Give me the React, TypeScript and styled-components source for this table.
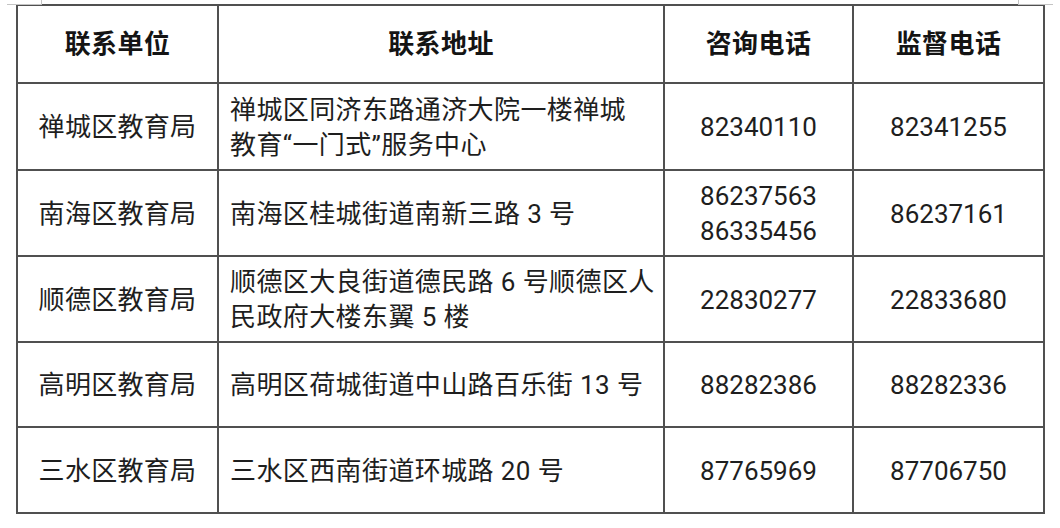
import React from "react";
import styled, { createGlobalStyle } from "styled-components";

interface Row {
  unit: string;
  address: string[];
  consult: string[];
  supervise: string;
  height: number;
}

const rows: Row[] = [
  {
    unit: "禅城区教育局",
    address: ["禅城区同济东路通济大院一楼禅城", "教育“一门式”服务中心"],
    consult: ["82340110"],
    supervise: "82341255",
    height: 87,
  },
  {
    unit: "南海区教育局",
    address: ["南海区桂城街道南新三路 3 号"],
    consult: ["86237563", "86335456"],
    supervise: "86237161",
    height: 86,
  },
  {
    unit: "顺德区教育局",
    address: ["顺德区大良街道德民路 6 号顺德区人", "民政府大楼东翼 5 楼"],
    consult: ["22830277"],
    supervise: "22833680",
    height: 86,
  },
  {
    unit: "高明区教育局",
    address: ["高明区荷城街道中山路百乐街 13 号"],
    consult: ["88282386"],
    supervise: "88282336",
    height: 85,
  },
  {
    unit: "三水区教育局",
    address: ["三水区西南街道环城路 20 号"],
    consult: ["87765969"],
    supervise: "87706750",
    height: 86,
  },
];

const GlobalStyle = createGlobalStyle`
  html, body {
    margin: 0;
    padding: 0;
    background: #ffffff;
  }
  body {
    font-family: Roboto, "Noto Sans CJK SC", sans-serif;
    color: #1e1e1e;
  }
`;

const Page = styled.div`
  position: relative;
  width: 1060px;
  height: 528px;
  padding: 4px 0 0 16px;
  box-sizing: border-box;
  overflow: hidden;
`;

// the little text-boundary marks a word processor draws above the table
const CornerMark = styled.div<{ $side: "left" | "right" }>`
  position: absolute;
  top: 0;
  ${(p) => (p.$side === "left" ? "left: 7px;" : "left: 1018px;")}
  width: 34px;
  height: 4px;
  border-bottom: 1px solid #c4c4c4;
  ${(p) =>
    p.$side === "left"
      ? "border-right: 1px solid #c4c4c4;"
      : "border-left: 1px solid #c4c4c4;"}
`;

const Table = styled.table`
  border-collapse: collapse;
  table-layout: fixed;
  width: 1027px;
  font-size: 26px;
  line-height: 35px;
`;

const HeadRow = styled.tr`
  height: 78px;
`;

const HeadCell = styled.th`
  border: 2px solid #505050;
  padding: 0;
  font-weight: 700;
  color: #141414;
  text-align: center;
  vertical-align: middle;
  letter-spacing: 0.4px;
`;

const BodyRow = styled.tr``;

const Cell = styled.td<{ $align?: "left" | "center"; $spacing?: number }>`
  border: 2px solid #505050;
  padding: ${(p) => (p.$align === "left" ? "2px 0 0 11px" : "2px 0 0 0")};
  text-align: ${(p) => p.$align ?? "center"};
  vertical-align: middle;
  white-space: nowrap;
  letter-spacing: ${(p) => p.$spacing ?? 0}px;
`;

const Line = styled.div``;

export default function App() {
  return (
    <>
      <GlobalStyle />
      <Page>
        <CornerMark $side="left" />
        <CornerMark $side="right" />
        <Table>
          <colgroup>
            <col style={{ width: 201 }} />
            <col style={{ width: 446 }} />
            <col style={{ width: 189 }} />
            <col style={{ width: 191 }} />
          </colgroup>
          <thead>
            <HeadRow>
              <HeadCell>联系单位</HeadCell>
              <HeadCell>联系地址</HeadCell>
              <HeadCell>咨询电话</HeadCell>
              <HeadCell>监督电话</HeadCell>
            </HeadRow>
          </thead>
          <tbody>
            {rows.map((r) => (
              <BodyRow key={r.unit} style={{ height: r.height }}>
                <Cell $spacing={0.3}>{r.unit}</Cell>
                <Cell $align="left" $spacing={0.4}>
                  {r.address.map((l) => (
                    <Line key={l}>{l}</Line>
                  ))}
                </Cell>
                <Cell>
                  {r.consult.map((l) => (
                    <Line key={l}>{l}</Line>
                  ))}
                </Cell>
                <Cell>{r.supervise}</Cell>
              </BodyRow>
            ))}
          </tbody>
        </Table>
      </Page>
    </>
  );
}
